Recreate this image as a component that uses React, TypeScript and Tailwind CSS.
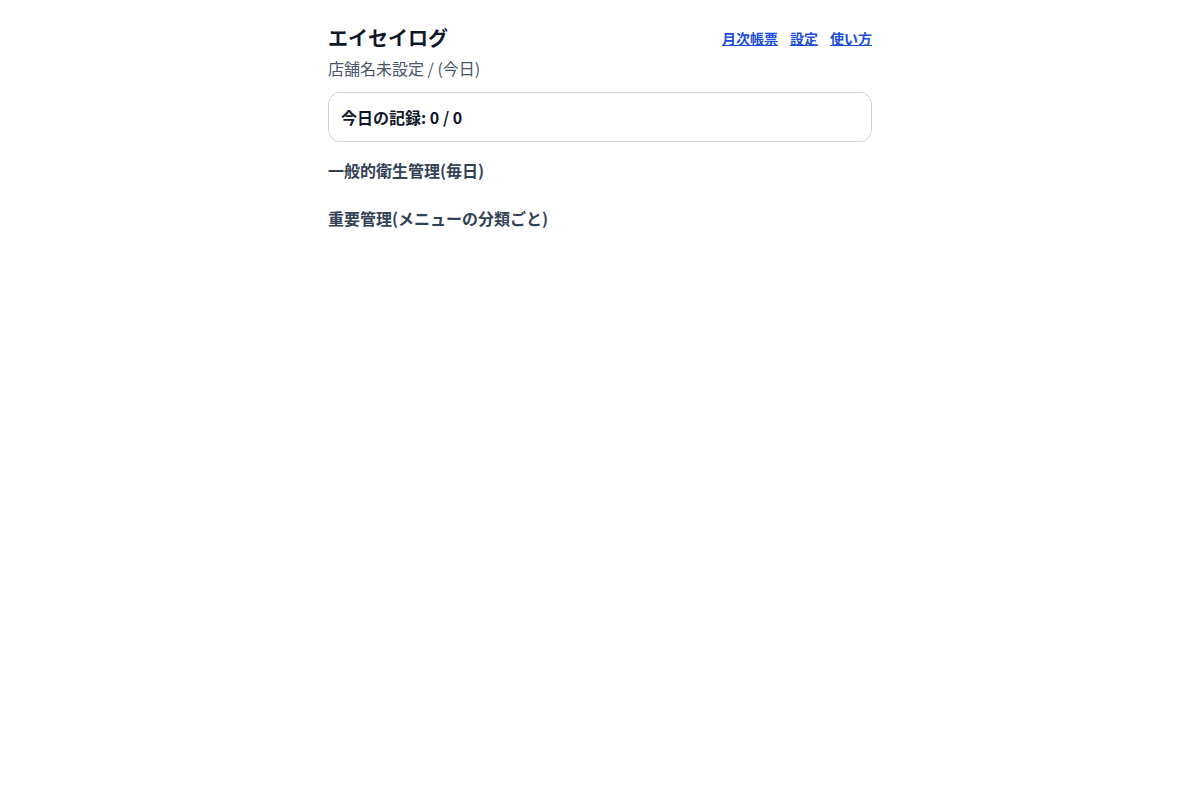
import React from 'react';

const App: React.FC = () => {
  return (
    <div className="min-h-screen bg-white" style={{ fontFamily: '"Noto Sans CJK JP", "Noto Sans", sans-serif' }}>
      <main className="mx-auto w-[544px] pt-6">
        <header className="flex items-center justify-between">
          <h1 className="text-[20px] font-bold leading-[28px] text-[#0f172a]">エイセイログ</h1>
          <nav className="flex gap-3 text-[14px] font-bold text-[#1d4ed8]">
            <a href="#" className="underline">月次帳票</a>
            <a href="#" className="underline">設定</a>
            <a href="#" className="underline">使い方</a>
          </nav>
        </header>
        <p className="mt-1 text-[16px] leading-[24px] text-[#475569]">店舗名未設定 / (今日)</p>
        <section className="mt-3 rounded-xl border border-[#cbd5e1] px-3 py-3">
          <p className="text-[16px] font-bold leading-[24px] text-[#0f172a]">今日の記録: 0 / 0</p>
        </section>
        <h2 className="mt-4 text-[16px] font-bold leading-[24px] text-[#334155]">一般的衛生管理(毎日)</h2>
        <h2 className="mt-6 text-[16px] font-bold leading-[24px] text-[#334155]">重要管理(メニューの分類ごと)</h2>
      </main>
    </div>
  );
};

export default App;
